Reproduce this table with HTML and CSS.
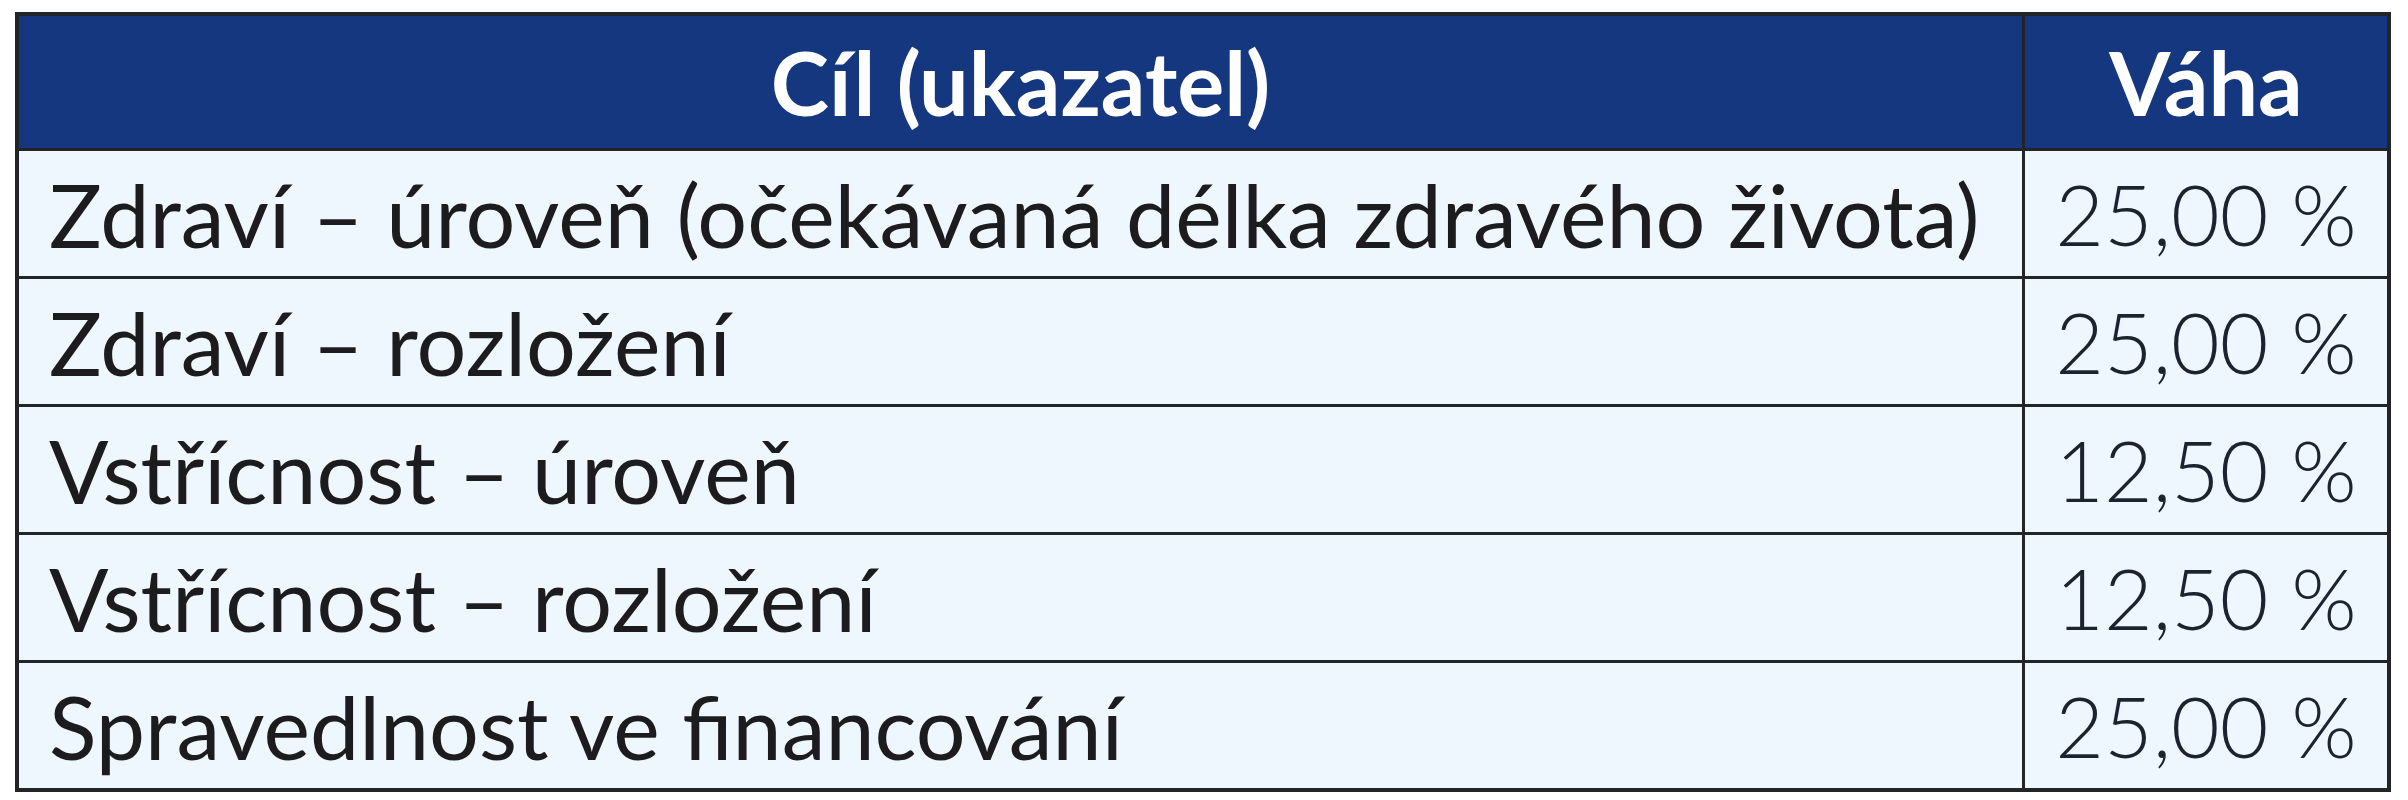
FILE: index.html
```html
<!DOCTYPE html>
<html lang="cs">
<head>
<meta charset="utf-8">
<link rel="stylesheet" href="styles.css">
</head>
<body>
<table class="weights">
  <thead>
    <tr><th class="goal">Cíl (ukazatel)</th><th class="weight">Váha</th></tr>
  </thead>
  <tbody>
    <tr><td class="goal">Zdraví – úroveň (očekávaná délka zdravého života)</td><td class="weight">25,00 %</td></tr>
    <tr><td class="goal">Zdraví – rozložení</td><td class="weight">25,00 %</td></tr>
    <tr><td class="goal">Vstřícnost – úroveň</td><td class="weight">12,50 %</td></tr>
    <tr><td class="goal">Vstřícnost – rozložení</td><td class="weight">12,50 %</td></tr>
    <tr><td class="goal">Spravedlnost ve financování</td><td class="weight">25,00 %</td></tr>
  </tbody>
</table>
</body>
</html>
```
FILE: styles.css
```css
html, body {
  margin: 0;
  padding: 0;
  background: #ffffff;
}
body {
  padding: 12px 0 0 15px;
}
.weights {
  border-collapse: collapse;
  width: 2376px;
  table-layout: fixed;
  font-family: Lato, "Open Sans", sans-serif;
  border: 4px solid #222428;
}
.weights th,
.weights td {
  border: 3px solid #222428;
  padding: 0;
  white-space: nowrap;
}
.weights th {
  background: #143780;
  color: #ffffff;
  font-weight: 700;
  font-size: 88px;
  height: 132px;
  text-align: center;
}
.weights td {
  background: #eef6fe;
  color: #1c1c1e;
  font-size: 88px;
  height: 125px;
}
.weights .goal {
  width: 2003px;
}
.weights td.goal {
  padding-left: 30px;
  text-align: left;
}
.weights td.weight {
  text-align: center;
  font-weight: 300;
  font-size: 84px;
  color: #1d2230;
}
```
